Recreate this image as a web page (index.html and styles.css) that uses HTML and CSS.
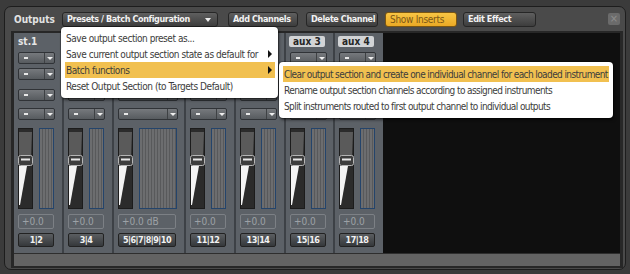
FILE: index.html
```html
<!DOCTYPE html>
<html lang="en">
<head>
    <meta charset="UTF-8">
    <meta name="viewport" content="width=device-width, initial-scale=1.0">
    <title>Outputs</title>
    <link rel="stylesheet" href="styles.css">
</head>
<body>
    <div class="window">
        <div class="toolbar">
            <span class="title">Outputs</span>
            <div class="btn presets">Presets / Batch Configuration<span class="caret"></span></div>
            <div class="btn add">Add Channels</div>
            <div class="btn delete">Delete Channel</div>
            <div class="btn show active">Show Inserts</div>
            <div class="btn edit">Edit Effect</div>
            <div class="close">&times;</div>
        </div>

        <div class="well">
            <div class="mixer">
                <div class="strip first">
                    <div class="name">st.1</div>
                    <div class="dd dd1"><span class="dash"></span><span class="arrow"></span></div>
                    <div class="dd dd2"><span class="dash"></span><span class="arrow"></span></div>
                    <div class="dd dd3"><span class="dash"></span><span class="arrow"></span></div>
                    <div class="dd dd4"><span class="dash"></span><span class="arrow"></span></div>
                    <div class="faders">
                        <svg class="fader" width="15" height="81" viewBox="0 0 15 81"><rect x="0.5" y="0.5" width="14" height="80" fill="#2b2b2b" stroke="#1c1c1c"/><polygon points="1,4 14,4 13,28 1,28" fill="#5a5a5a"/><polygon points="1,38 9,38 2,77 1,77" fill="#f4f4f4"/><rect x="0.5" y="27.5" width="14" height="10" rx="2" fill="#3d3d3d" stroke="#b4b4b4"/><line x1="3" y1="31.5" x2="12" y2="31.5" stroke="#e6e6e6" stroke-width="2"/></svg>
                        <div class="meter"></div>
                    </div>
                    <div class="gain">+0.0</div>
                    <div class="route">1|2</div>
                </div>
                <div class="strip">
                    <div class="name"></div>
                    <div class="dd dd1"><span class="dash"></span><span class="arrow"></span></div>
                    <div class="dd dd2"><span class="dash"></span><span class="arrow"></span></div>
                    <div class="dd dd3"><span class="dash"></span><span class="arrow"></span></div>
                    <div class="dd dd4"><span class="dash"></span><span class="arrow"></span></div>
                    <div class="faders">
                        <svg class="fader" width="15" height="81" viewBox="0 0 15 81"><rect x="0.5" y="0.5" width="14" height="80" fill="#2b2b2b" stroke="#1c1c1c"/><polygon points="1,4 14,4 13,28 1,28" fill="#5a5a5a"/><polygon points="1,38 9,38 2,77 1,77" fill="#f4f4f4"/><rect x="0.5" y="27.5" width="14" height="10" rx="2" fill="#3d3d3d" stroke="#b4b4b4"/><line x1="3" y1="31.5" x2="12" y2="31.5" stroke="#e6e6e6" stroke-width="2"/></svg>
                        <div class="meter"></div>
                    </div>
                    <div class="gain">+0.0</div>
                    <div class="route">3|4</div>
                </div>
                <div class="strip wide">
                    <div class="name"></div>
                    <div class="dd dd1"><span class="dash"></span><span class="arrow"></span></div>
                    <div class="dd dd2"><span class="dash"></span><span class="arrow"></span></div>
                    <div class="dd dd3"><span class="dash"></span><span class="arrow"></span></div>
                    <div class="dd dd4"><span class="dash"></span><span class="arrow"></span></div>
                    <div class="faders">
                        <svg class="fader" width="15" height="81" viewBox="0 0 15 81"><rect x="0.5" y="0.5" width="14" height="80" fill="#2b2b2b" stroke="#1c1c1c"/><polygon points="1,4 14,4 13,28 1,28" fill="#5a5a5a"/><polygon points="1,38 9,38 2,77 1,77" fill="#f4f4f4"/><rect x="0.5" y="27.5" width="14" height="10" rx="2" fill="#3d3d3d" stroke="#b4b4b4"/><line x1="3" y1="31.5" x2="12" y2="31.5" stroke="#e6e6e6" stroke-width="2"/></svg>
                        <div class="meter"></div>
                    </div>
                    <div class="gain">+0.0 dB</div>
                    <div class="route">5|6|7|8|9|10</div>
                </div>
                <div class="strip">
                    <div class="name"></div>
                    <div class="dd dd1"><span class="dash"></span><span class="arrow"></span></div>
                    <div class="dd dd2"><span class="dash"></span><span class="arrow"></span></div>
                    <div class="dd dd3"><span class="dash"></span><span class="arrow"></span></div>
                    <div class="dd dd4"><span class="dash"></span><span class="arrow"></span></div>
                    <div class="faders">
                        <svg class="fader" width="15" height="81" viewBox="0 0 15 81"><rect x="0.5" y="0.5" width="14" height="80" fill="#2b2b2b" stroke="#1c1c1c"/><polygon points="1,4 14,4 13,28 1,28" fill="#5a5a5a"/><polygon points="1,38 9,38 2,77 1,77" fill="#f4f4f4"/><rect x="0.5" y="27.5" width="14" height="10" rx="2" fill="#3d3d3d" stroke="#b4b4b4"/><line x1="3" y1="31.5" x2="12" y2="31.5" stroke="#e6e6e6" stroke-width="2"/></svg>
                        <div class="meter"></div>
                    </div>
                    <div class="gain">+0.0</div>
                    <div class="route">11|12</div>
                </div>
                <div class="strip">
                    <div class="name"></div>
                    <div class="dd dd1"><span class="dash"></span><span class="arrow"></span></div>
                    <div class="dd dd2"><span class="dash"></span><span class="arrow"></span></div>
                    <div class="dd dd3"><span class="dash"></span><span class="arrow"></span></div>
                    <div class="dd dd4"><span class="dash"></span><span class="arrow"></span></div>
                    <div class="faders">
                        <svg class="fader" width="15" height="81" viewBox="0 0 15 81"><rect x="0.5" y="0.5" width="14" height="80" fill="#2b2b2b" stroke="#1c1c1c"/><polygon points="1,4 14,4 13,28 1,28" fill="#5a5a5a"/><polygon points="1,38 9,38 2,77 1,77" fill="#f4f4f4"/><rect x="0.5" y="27.5" width="14" height="10" rx="2" fill="#3d3d3d" stroke="#b4b4b4"/><line x1="3" y1="31.5" x2="12" y2="31.5" stroke="#e6e6e6" stroke-width="2"/></svg>
                        <div class="meter"></div>
                    </div>
                    <div class="gain">+0.0</div>
                    <div class="route">13|14</div>
                </div>
                <div class="strip narrow">
                    <div class="name tag">aux 3</div>
                    <div class="dd dd1"><span class="dash"></span><span class="arrow"></span></div>
                    <div class="dd dd2"><span class="dash"></span><span class="arrow"></span></div>
                    <div class="dd dd3"><span class="dash"></span><span class="arrow"></span></div>
                    <div class="dd dd4"><span class="dash"></span><span class="arrow"></span></div>
                    <div class="faders">
                        <svg class="fader" width="15" height="81" viewBox="0 0 15 81"><rect x="0.5" y="0.5" width="14" height="80" fill="#2b2b2b" stroke="#1c1c1c"/><polygon points="1,4 14,4 13,28 1,28" fill="#5a5a5a"/><polygon points="1,38 9,38 2,77 1,77" fill="#f4f4f4"/><rect x="0.5" y="27.5" width="14" height="10" rx="2" fill="#3d3d3d" stroke="#b4b4b4"/><line x1="3" y1="31.5" x2="12" y2="31.5" stroke="#e6e6e6" stroke-width="2"/></svg>
                        <div class="meter"></div>
                    </div>
                    <div class="gain">+0.0</div>
                    <div class="route">15|16</div>
                </div>
                <div class="strip">
                    <div class="name tag">aux 4</div>
                    <div class="dd dd1"><span class="dash"></span><span class="arrow"></span></div>
                    <div class="dd dd2"><span class="dash"></span><span class="arrow"></span></div>
                    <div class="dd dd3"><span class="dash"></span><span class="arrow"></span></div>
                    <div class="dd dd4"><span class="dash"></span><span class="arrow"></span></div>
                    <div class="faders">
                        <svg class="fader" width="15" height="81" viewBox="0 0 15 81"><rect x="0.5" y="0.5" width="14" height="80" fill="#2b2b2b" stroke="#1c1c1c"/><polygon points="1,4 14,4 13,28 1,28" fill="#5a5a5a"/><polygon points="1,38 9,38 2,77 1,77" fill="#f4f4f4"/><rect x="0.5" y="27.5" width="14" height="10" rx="2" fill="#3d3d3d" stroke="#b4b4b4"/><line x1="3" y1="31.5" x2="12" y2="31.5" stroke="#e6e6e6" stroke-width="2"/></svg>
                        <div class="meter"></div>
                    </div>
                    <div class="gain">+0.0</div>
                    <div class="route">17|18</div>
                </div>
                <div class="empty"></div>
            </div>
            <div class="bottom-bar"></div>
        </div>

        <div class="menu main-menu">
            <div class="item">Save output section preset as...</div>
            <div class="item">Save current output section state as default for<span class="sub-arrow"></span></div>
            <div class="item hl">Batch functions<span class="sub-arrow"></span></div>
            <div class="item">Reset Output Section (to Targets Default)</div>
        </div>

        <div class="menu sub-menu">
            <div class="item hl">Clear output section and create one individual channel for each loaded instrument</div>
            <div class="item">Rename output section channels according to assigned instruments</div>
            <div class="item">Split instruments routed to first output channel to individual outputs</div>
        </div>
    </div>
</body>
</html>
```

FILE: styles.css
```css
body {
    margin: 0;
    background: #3b3b3b;
    font-family: "DejaVu Sans Condensed", "Liberation Sans", sans-serif;
    font-size: 10px;
}
.window {
    position: relative;
    margin: 6px 0 0 4px;
    width: 622px;
    height: 264px;
    box-sizing: border-box;
    border: 1px solid #1d1d1d;
    border-radius: 7px;
    background: #4a4a4a;
}

/* top bar */
.toolbar {
    display: flex;
    align-items: flex-start;
    height: 24px;
    padding: 5px 0 0 9px;
    box-sizing: border-box;
}
.title {
    width: 48px;
    line-height: 15px;
    font-weight: bold;
    color: #e2e2e2;
}
.btn {
    height: 15px;
    box-sizing: border-box;
    padding: 0 4px;
    border: 1px solid #262626;
    border-radius: 3px;
    background: linear-gradient(#5f5f5f, #3d3d3d);
    color: #f2f2f2;
    font-size: 9px;
    font-weight: bold;
    letter-spacing: -0.4px;
    line-height: 13px;
    white-space: nowrap;
}
.presets {
    width: 156px;
    display: flex;
    justify-content: space-between;
    align-items: center;
}
.caret {
    margin-right: 2px;
    border-top: 4px solid #eee;
    border-left: 3px solid transparent;
    border-right: 3px solid transparent;
}
.add { width: 70px; margin-left: 10px; }
.delete { width: 72px; margin-left: 8px; }
.show { width: 72px; margin-left: 7px; }
.edit { width: 73px; margin-left: 6px; }
.btn.active {
    background: linear-gradient(#f8c544, #eaa925);
    border-color: #7a5512;
    color: #7b5716;
    font-size: 10px;
    font-weight: normal;
    letter-spacing: -0.3px;
}
.close {
    margin: 1px 5px 0 auto;
    width: 12px;
    height: 12px;
    border-radius: 2px;
    background: #6b6b6b;
    color: #8d8d8d;
    font-size: 11px;
    line-height: 12px;
    text-align: center;
}

/* mixer well */
.well {
    margin: 0 2px 0 6px;
    height: 233px;
    border: 2px solid #272727;
    border-left-width: 3px;
    border-right-width: 3px;
}
.mixer {
    display: flex;
    height: 220px;
}
.strip {
    width: 44px;
    padding-left: 4px;
    border-left: 2px solid #3d4146;
    background: #5c6167;
    display: flex;
    flex-direction: column;
}
.strip.first {
    border-left: none;
}
.strip.wide {
    width: 66px;
}
.strip.narrow {
    width: 43px;
}
.empty {
    flex: 1;
    background: #0f0f0f;
}
.bottom-bar {
    height: 12px;
    border-top: 1px solid #2e2e2e;
    background: #636363;
}

.name {
    margin-top: 3px;
    height: 11px;
    line-height: 11px;
    font-weight: bold;
    color: #e6e6e6;
}
.name.tag {
    width: 36px;
    margin-left: -1px;
    padding-left: 4px;
    box-sizing: border-box;
    border-radius: 2px;
    background: #d2d4d6;
    color: #262626;
}

.dd {
    width: 37px;
    height: 12px;
    box-sizing: border-box;
    border: 1px solid #303337;
    border-radius: 2px;
    background: linear-gradient(#76797d, #575b5f);
    display: flex;
    align-items: center;
    justify-content: space-between;
}
.wide .dd { width: 60px; }
.dd1 { margin-top: 5px; }
.dd2 { margin-top: 4px; }
.dd3 { margin-top: 9px; }
.dd4 { margin-top: 7px; }
.dash {
    width: 4px;
    height: 2px;
    margin-left: 5px;
    background: #e8e8e8;
}
.arrow {
    width: 9px;
    height: 100%;
    border-left: 1px solid #3e4144;
    display: flex;
    align-items: center;
    justify-content: center;
}
.arrow::after {
    content: "";
    border-top: 3px solid #f0f0f0;
    border-left: 3px solid transparent;
    border-right: 3px solid transparent;
}

.faders {
    display: flex;
    gap: 6px;
    height: 81px;
    margin-top: 8px;
}
.fader {
    display: block;
}
.meter {
    width: 15px;
    box-sizing: border-box;
    border: 1px solid #24446b;
    background: repeating-linear-gradient(90deg, #6c6d6f 0 2px, #58595b 2px 3px);
}
.wide .meter { width: 38px; }

.gain {
    width: 36px;
    height: 15px;
    margin-top: 5px;
    box-sizing: border-box;
    padding-left: 3px;
    border: 1px solid #7c8085;
    border-radius: 2px;
    color: #9da1a6;
    line-height: 13px;
}
.route {
    width: 36px;
    height: 14px;
    margin-top: 4px;
    box-sizing: border-box;
    border: 1px solid #222;
    border-radius: 2px;
    background: linear-gradient(#5b5e61, #35383b);
    color: #f2f2f2;
    font-size: 9px;
    font-weight: bold;
    letter-spacing: -0.5px;
    line-height: 12px;
    text-align: center;
}
.wide .gain, .wide .route { width: 58px; }

/* popup menus */
.menu {
    position: absolute;
    background: #fff;
    border-radius: 4px;
    box-shadow: 0 0 0 1px rgba(0, 0, 0, 0.25), 1px 2px 3px rgba(0, 0, 0, 0.55);
    color: #3c3c3c;
    letter-spacing: -0.45px;
}
.main-menu {
    left: 56px;
    top: 20px;
    width: 210px;
    padding: 3px 3px 4px 4px;
}
.sub-menu {
    left: 274px;
    top: 55px;
    width: 326px;
    padding: 4px;
    letter-spacing: -0.6px;
}
.item {
    height: 16px;
    padding: 0 3px 0 1px;
    display: flex;
    justify-content: space-between;
    align-items: center;
    white-space: nowrap;
}
.item.hl {
    background: #f1c050;
}
.sub-arrow {
    border-left: 4px solid #111;
    border-top: 4px solid transparent;
    border-bottom: 4px solid transparent;
}
```
